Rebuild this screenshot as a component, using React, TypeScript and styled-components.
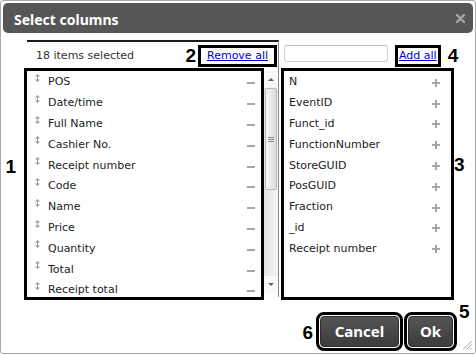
import React from "react";
import styled, { createGlobalStyle } from "styled-components";

const Global = createGlobalStyle`
  html, body { margin: 0; padding: 0; background: #fff; }
  body { font-family: "DejaVu Sans", Verdana, sans-serif; }
  * { box-sizing: border-box; }
`;

const Dialog = styled.div`
  position: relative;
  width: 476px;
  height: 354px;
  border: 1px solid #a9a9a9;
  border-radius: 3px;
  padding: 2px;
  background: #fff;
  display: flex;
  flex-direction: column;
`;

const TitleBar = styled.div`
  height: 30px;
  flex: none;
  background: #565656;
  border-radius: 5px;
  display: flex;
  align-items: center;
  justify-content: space-between;
  padding: 3px 8px 0 11px;
`;

const Title = styled.h1`
  margin: 0;
  font: 700 14px/20px "Noto Sans", sans-serif;
  color: #fff;
`;

const CloseButton = styled.button`
  width: 9px;
  height: 9px;
  padding: 0;
  border: 0;
  background: none;
  display: flex;
  margin-bottom: 3px;
`;

const Body = styled.div`
  flex: 1;
  display: flex;
  flex-direction: column;
  padding: 7px 20px 0 24px;
`;

const Columns = styled.div`
  display: flex;
  height: 257px;
`;

const LeftPanel = styled.section`
  width: 252px;
  flex: none;
  border-top: 2px solid #1a1a1a;
  border-right: 1px solid #8a8a8a;
  display: flex;
  flex-direction: column;
`;

const RightPanel = styled.section`
  flex: 1;
  padding: 2px 0 0 5px;
  display: flex;
  flex-direction: column;
`;

const PanelHeader = styled.div<{ $spread?: boolean }>`
  height: 29px;
  flex: none;
  display: flex;
  align-items: flex-start;
  justify-content: ${(p) => (p.$spread ? "space-between" : "flex-start")};
  gap: 10px;
  padding: 6px ${(p) => (p.$spread ? "4px" : "0")} 0 ${(p) => (p.$spread ? "9px" : "0")};
`;

const Count = styled.span`
  font: 11px/16px "DejaVu Sans", Verdana, sans-serif;
  color: #333;
`;

const LinkButton = styled.button<{ $padX: number }>`
  position: relative;
  height: 16px;
  padding: 0 ${(p) => p.$padX}px;
  border: 0;
  background: none;
  font: 11px/16px "DejaVu Sans", Verdana, sans-serif;
  color: #0000cc;
  text-decoration: underline;
  outline: 3px solid #000;
  cursor: pointer;
`;

const Search = styled.input`
  width: 104px;
  height: 17px;
  margin-top: -3px;
  border: 1px solid #cfcfcf;
  border-top-color: #bdbdbd;
  border-radius: 3px;
  background: #fff;
  padding: 0 3px;
  font: 11px "DejaVu Sans", Verdana, sans-serif;
`;

const ListRow = styled.div`
  flex: 1;
  display: flex;
  gap: 3px;
`;

const ListBox = styled.div<{ $w: number }>`
  position: relative;
  width: ${(p) => p.$w}px;
  height: 226px;
  flex: none;
  padding-bottom: 2px;
  outline: 3px solid #000;
  background: #fff;
`;

const Items = styled.ul`
  margin: 0;
  padding: 1px 0 0;
  list-style: none;
  height: 100%;
  overflow: hidden;
`;

const Item = styled.li<{ $left: number; $right: number }>`
  height: 20.8px;
  display: flex;
  align-items: center;
  padding: 0 ${(p) => p.$right}px 0 ${(p) => p.$left}px;
  font: 11px/14px "DejaVu Sans", Verdana, sans-serif;
  color: #222;
`;

const Label = styled.span`
  flex: 1;
  white-space: nowrap;
`;

const HandleIcon = styled.svg`
  align-self: flex-start;
  margin-top: 2px;
  margin-right: 8px;
  flex: none;
`;

const Minus = styled.span`
  width: 8px;
  height: 2px;
  margin-top: 2px;
  background: #a6a6a6;
  flex: none;
`;

const PlusIcon = styled.svg`
  flex: none;
  margin-top: 1px;
`;

const Scrollbar = styled.div`
  width: 14px;
  height: 222px;
  flex: none;
  display: flex;
  flex-direction: column;
  background: linear-gradient(to right, #e3e3e3, #f4f4f4);
`;

const ScrollArrow = styled.div<{ $down?: boolean }>`
  height: 17px;
  flex: none;
  display: flex;
  align-items: center;
  justify-content: center;
  background: #f8f8f8;
  &::before {
    content: "";
    border-left: 3px solid transparent;
    border-right: 3px solid transparent;
    ${(p) => (p.$down ? "border-top: 3px solid #606060;" : "border-bottom: 3px solid #606060;")}
  }
`;

const Thumb = styled.div`
  height: 102px;
  flex: none;
  margin: 0 1px;
  border: 1px solid #b8b8b8;
  border-radius: 2px;
  background: linear-gradient(to right, #f8f8f8, #dcdcdc);
  display: flex;
  align-items: center;
  justify-content: center;
`;

const Grip = styled.span`
  position: relative;
  width: 6px;
  height: 5px;
  border-top: 1px solid #8a8a8a;
  border-bottom: 1px solid #8a8a8a;
  &::after {
    content: "";
    position: absolute;
    left: 0;
    right: 0;
    top: 1px;
    height: 1px;
    background: #8a8a8a;
  }
`;

const Track = styled.div`
  flex: 1;
`;

const Footer = styled.div`
  display: flex;
  justify-content: flex-end;
  gap: 9px;
  margin-top: 19px;
`;

const DarkButton = styled.button<{ $w: number }>`
  position: relative;
  width: ${(p) => p.$w}px;
  height: 31px;
  padding: 0 0 2px;
  border: 1px solid #2e2e2e;
  border-radius: 4px;
  background: linear-gradient(#555, #3b3b3b);
  color: #fff;
  font: 700 15px "Noto Sans", sans-serif;
  outline: 3px solid #000;
  outline-offset: 1px;
  cursor: pointer;
`;

const Tag = styled.span<{ $top: string; $left?: string; $right?: string }>`
  position: absolute;
  top: ${(p) => p.$top};
  ${(p) => (p.$left ? `left: ${p.$left};` : "")}
  ${(p) => (p.$right ? `right: ${p.$right};` : "")}
  font: 700 19px/20px "Liberation Sans", Arial, sans-serif;
  color: #000;
  text-decoration: none;
  pointer-events: none;
`;

const ResizeGrip = styled.svg`
  position: absolute;
  right: 3px;
  bottom: 3px;
`;

const leftItems = [
  "POS",
  "Date/time",
  "Full Name",
  "Cashier No.",
  "Receipt number",
  "Code",
  "Name",
  "Price",
  "Quantity",
  "Total",
  "Receipt total",
];

const rightItems = [
  "N",
  "EventID",
  "Funct_id",
  "FunctionNumber",
  "StoreGUID",
  "PosGUID",
  "Fraction",
  "_id",
  "Receipt number",
];

const Handle = () => (
  <HandleIcon width="5" height="8" viewBox="0 0 5 8">
    <path d="M2.5 0 L5 2.5 H3 V5.5 H5 L2.5 8 L0 5.5 H2 V2.5 H0 Z" fill="#9a9a9a" />
  </HandleIcon>
);

const Plus = () => (
  <PlusIcon width="8" height="8" viewBox="0 0 8 8">
    <rect x="3" y="0" width="2" height="8" fill="#a6a6a6" />
    <rect x="0" y="3" width="8" height="2" fill="#a6a6a6" />
  </PlusIcon>
);

export default function App() {
  return (
    <>
      <Global />
      <Dialog>
        <TitleBar>
          <Title>Select columns</Title>
          <CloseButton aria-label="Close">
            <svg width="9" height="9" viewBox="0 0 9 9">
              <path d="M1 1 L8 8 M8 1 L1 8" stroke="#a8a8a8" strokeWidth="2.4" strokeLinecap="round" />
            </svg>
          </CloseButton>
        </TitleBar>
        <Body>
          <Columns>
            <LeftPanel>
              <PanelHeader $spread>
                <Count>18 items selected</Count>
                <LinkButton $padX={6}>
                  Remove all
                  <Tag $top="-2px" $right="calc(100% + 5px)">2</Tag>
                </LinkButton>
              </PanelHeader>
              <ListRow>
                <ListBox $w={234}>
                  <Items>
                    {leftItems.map((name) => (
                      <Item key={name} $left={8} $right={6}>
                        <Handle />
                        <Label>{name}</Label>
                        <Minus />
                      </Item>
                    ))}
                  </Items>
                  <Tag $top="86px" $right="calc(100% + 11px)">1</Tag>
                </ListBox>
                <Scrollbar>
                  <ScrollArrow />
                  <Thumb>
                    <Grip />
                  </Thumb>
                  <Track />
                  <ScrollArrow $down />
                </Scrollbar>
              </ListRow>
            </LeftPanel>
            <RightPanel>
              <PanelHeader>
                <Search aria-label="Search" />
                <LinkButton $padX={1}>
                  Add all
                  <Tag $top="-2px" $left="calc(100% + 10px)">4</Tag>
                </LinkButton>
              </PanelHeader>
              <ListBox $w={167}>
                <Items>
                  {rightItems.map((name) => (
                    <Item key={name} $left={5} $right={11}>
                      <Label>{name}</Label>
                      <Plus />
                    </Item>
                  ))}
                </Items>
                <Tag $top="84px" $left="calc(100% + 3px)">3</Tag>
              </ListBox>
            </RightPanel>
          </Columns>
          <Footer>
            <DarkButton $w={79}>
              Cancel
              <Tag $top="6px" $right="calc(100% + 8px)">6</Tag>
            </DarkButton>
            <DarkButton $w={45}>
              Ok
              <Tag $top="-15px" $left="calc(100% + 7px)">5</Tag>
            </DarkButton>
          </Footer>
        </Body>
        <ResizeGrip width="10" height="10" viewBox="0 0 10 10">
          <path d="M9.5 1 L1 9.5 M9.5 4.5 L4.5 9.5 M9.5 8 L8 9.5" stroke="#a0a0a0" strokeWidth="1" />
        </ResizeGrip>
      </Dialog>
    </>
  );
}
